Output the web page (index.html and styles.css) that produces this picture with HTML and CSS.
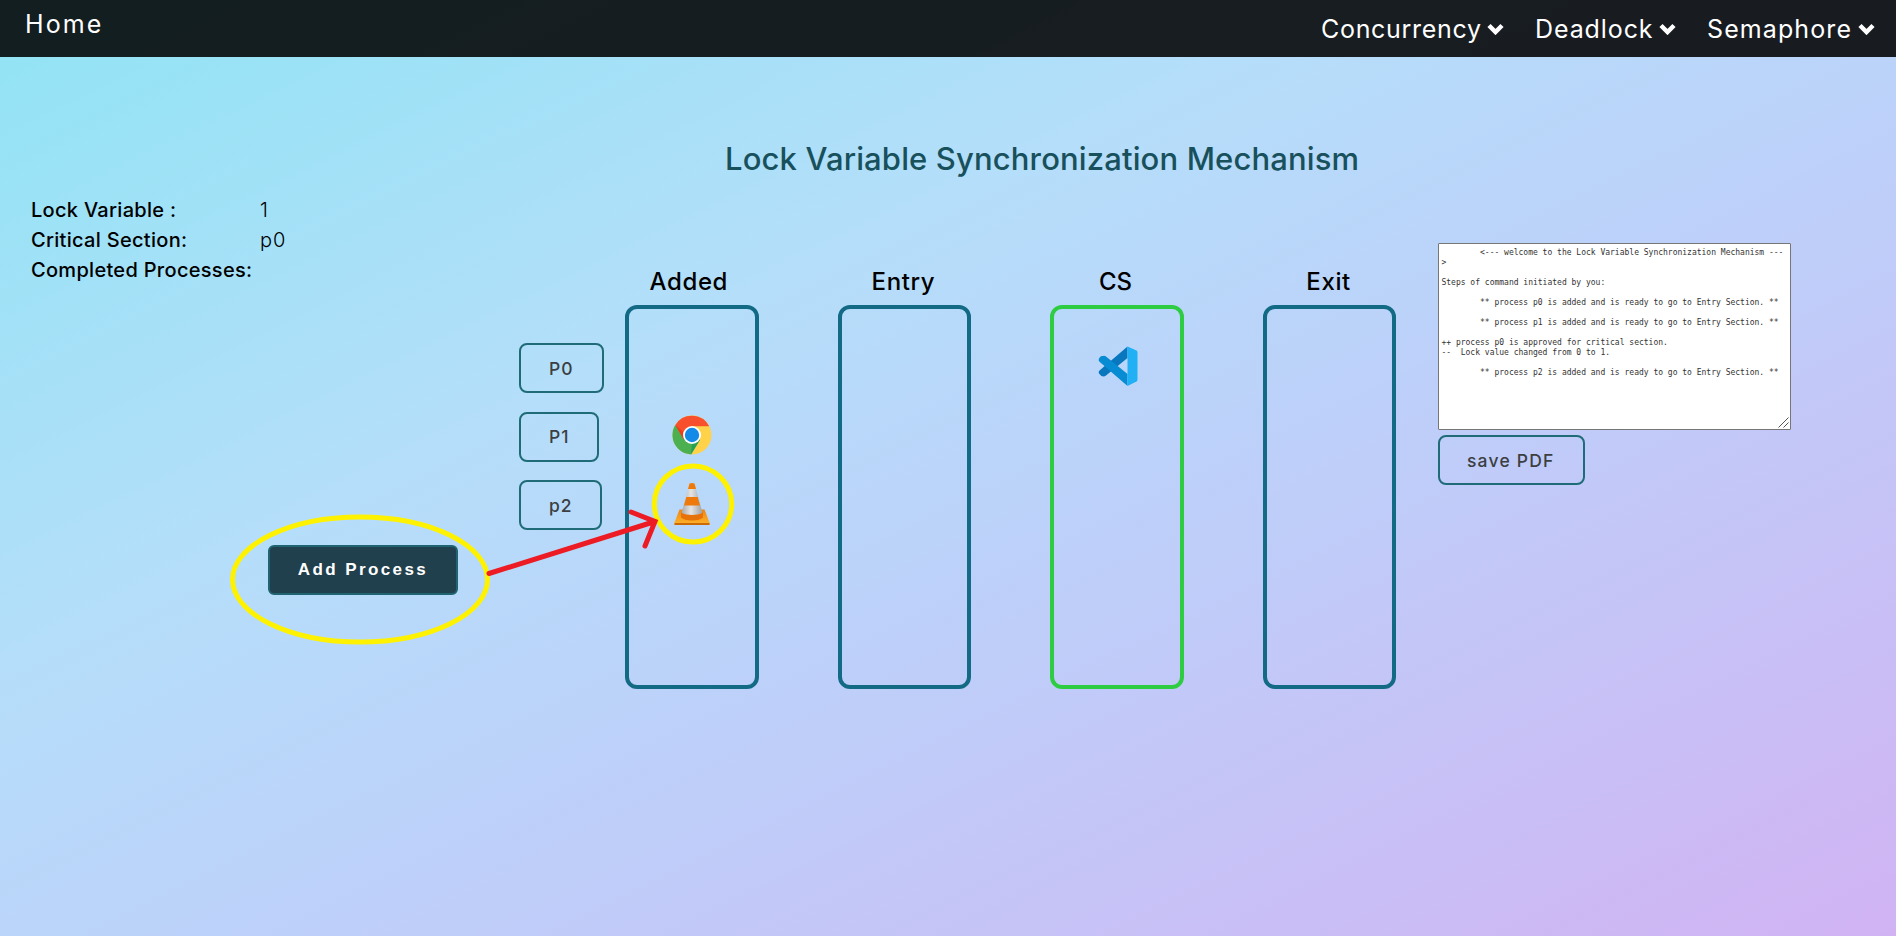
FILE: index.html
```html
<!DOCTYPE html>
<html lang="en">
<head>
<meta charset="utf-8">
<title>Lock Variable Synchronization Mechanism</title>
<link rel="stylesheet" href="styles.css">
</head>
<body>
<header class="nav">
  <a class="nav-home">Home</a>
  <nav class="nav-menu">
    <a class="nav-item"><span class="nav-conc">Concurrency</span><svg class="chevron" viewBox="0 0 17 12"><path d="M2 2.5 8.5 9 15 2.5"/></svg></a>
    <a class="nav-item"><span class="nav-dead">Deadlock</span><svg class="chevron" viewBox="0 0 17 12"><path d="M2 2.5 8.5 9 15 2.5"/></svg></a>
    <a class="nav-item"><span class="nav-sema">Semaphore</span><svg class="chevron" viewBox="0 0 17 12"><path d="M2 2.5 8.5 9 15 2.5"/></svg></a>
  </nav>
</header>
<main>
  <h1 class="title">Lock Variable Synchronization Mechanism</h1>
  <div class="board">
    <section class="side">
      <dl class="info">
        <dt>Lock Variable :</dt><dd>1</dd>
        <dt>Critical Section:</dt><dd>p0</dd>
        <dt>Completed Processes:</dt><dd></dd>
      </dl>
      <button class="add">Add Process</button>
    </section>
    <section class="processes">
      <button class="btn p0">P0</button>
      <button class="btn p1">P1</button>
      <button class="btn p2">p2</button>
    </section>
    <section class="stages">
      <div class="stage">
        <h2 class="h-added">Added</h2>
        <div class="slot slot-added">
          <svg class="app-chrome" viewBox="0 0 40 40">
            <circle cx="20" cy="20" r="19.5" fill="#ffd24a"/>
            <path d="M20 20 3.1 10.2A19.5 19.5 0 0 0 19 39.5L28 24.7Z" fill="#4caf50"/>
            <path d="M19 39.5 28 24.7 20 28Z" fill="#22a254"/>
            <path d="M3.3 10A19.5 19.5 0 0 1 37.2 11.3H20L12 24Z" fill="#f8502d"/>
            <path d="M3.3 10 12 25 11.4 17Z" fill="#f03a17"/>
            <circle cx="20" cy="20" r="9" fill="#fff"/>
            <circle cx="20" cy="20" r="7.2" fill="#128be8"/>
          </svg>
          <svg class="app-vlc" viewBox="0 0 36 42">
            <defs>
              <linearGradient id="base" x1="0" y1="0" x2="0" y2="1"><stop offset="0" stop-color="#ee8412"/><stop offset="1" stop-color="#ffb52b"/></linearGradient>
              <linearGradient id="cone"><stop offset="0" stop-color="#a8a8a8"/><stop offset=".45" stop-color="#e4e4e4"/><stop offset="1" stop-color="#a0a0a0"/></linearGradient>
            </defs>
            <path d="M5.500 26.500H30.500L35.500 39.500V42H.5V39.500Z" fill="url(#base)"/>
            <path d="M.5 40H35.500V42H.5Z" fill="#cc6a08"/>
            <path d="M7 29H29V34.500Q26 37.500 18 37.500T7 34.500Z" fill="#e8720a"/>
            <path d="M15.500.5Q18-.5 20.500.5L28.500 30Q24 32 18 32T7.500 30Z" fill="url(#cone)"/>
            <path d="M15.500.5Q18-.5 20.500.5L22 6H14ZM12.300 14H23.700L26 22.500H10Z" fill="#ee7a0b"/>
          </svg>
        </div>
      </div>
      <div class="stage"><h2 class="h-entry">Entry</h2><div class="slot"></div></div>
      <div class="stage">
        <h2 class="h-cs">CS</h2>
        <div class="slot slot-active">
          <svg class="app-code" viewBox="0 0 40 40">
            <path d="M5.500 30.500Q3 30.500 1 27.500Q0 26 1.500 24.500L29.500.5V12L8 29.500Q6.800 30.500 5.500 30.500Z" fill="#0877be"/>
            <path d="M5 10Q3.500 9.500 2 11L.8 13Q.3 14.500 1.500 15.800L29.500 40V28L8 10.500Q6.500 9.500 5 10Z" fill="#078bd3"/>
            <path d="M29.500.5 38.500 4.500Q39.500 5 39.500 6.500V33.500Q39.500 35 38.500 35.500L29.500 40Z" fill="#22b0f5"/>
          </svg>
        </div>
      </div>
      <div class="stage"><h2 class="h-exit">Exit</h2><div class="slot"></div></div>
    </section>
    <section class="log">
      <div class="log-box">
<textarea class="log-text" spellcheck="false">
	<--- welcome to the Lock Variable Synchronization Mechanism ---
>

Steps of command initiated by you:

	** process p0 is added and is ready to go to Entry Section. **

	** process p1 is added and is ready to go to Entry Section. **

++ process p0 is approved for critical section.
--  Lock value changed from 0 to 1.

	** process p2 is added and is ready to go to Entry Section. **</textarea>
        <svg class="grip" viewBox="0 0 11 11"><path d="M.5 10.500 10.500.5M5.500 10.500 10.500 5.500"/></svg>
      </div>
      <button class="btn save">save PDF</button>
    </section>
  </div>
</main>
<svg class="marks" viewBox="0 0 1896 936">
  <g class="mark-ring"><ellipse cx="360" cy="579.500" rx="127.500" ry="62.500"/><ellipse cx="693" cy="504" rx="38.700" ry="38"/></g>
  <path class="mark-arrow" d="M489 573.500 655 521.500M631 512 655 521.500 645 546"/>
</svg>
</body>
</html>
```
FILE: styles.css
```css
* { box-sizing: border-box; }
body {
  margin: 0;
  height: 936px;
  overflow: hidden;
  position: relative;
  font-family: Inter, "Open Sans", sans-serif;
  color: #000;
  background: linear-gradient(to bottom right, #90e4f4 0%, #b5defa 36%, #bfcdf9 62%, #d1b3f3 100%);
}
.nav {
  height: 57px;
  padding: 0 21px 0 25px;
  display: flex;
  justify-content: space-between;
  background: rgba(0, 0, 0, .87);
  color: #fff;
  font-size: 25px;
  font-weight: 380;
}
.nav-home { line-height: 48px; letter-spacing: 2.1px; }
.nav-menu { display: flex; gap: 31px; line-height: 59px; }
.nav-item { display: flex; gap: 6px; white-space: nowrap; }
.nav-conc { width: 160px; letter-spacing: .7px; }
.nav-dead { width: 118px; letter-spacing: .9px; }
.nav-sema { width: 145px; letter-spacing: 1.1px; }
.chevron { width: 17px; height: 12px; margin-top: 23px; fill: none; stroke: #fff; stroke-width: 4.500; }
.title {
  margin: 82px 0 0 725px;
  height: 40px;
  line-height: 40px;
  font-size: 31px;
  font-weight: 450;
  letter-spacing: .14px;
  white-space: nowrap;
  color: #18505c;
}
.board { display: flex; align-items: flex-start; padding-top: 16px; }
.side { width: 519px; flex: none; }
.info {
  margin: 0 0 0 31px;
  display: grid;
  grid-template-columns: 229px 1fr;
  grid-auto-rows: 30px;
  line-height: 30px;
  font-size: 20px;
  letter-spacing: .3px;
  white-space: nowrap;
}
.info dt { font-weight: 500; }
.info dd { margin: 0; font-weight: 300; letter-spacing: 1px; }
.add {
  display: block;
  margin: 260px 0 0 268px;
  width: 190px;
  height: 50px;
  padding: 0;
  border: 2px solid #1f6470;
  border-radius: 6px;
  background: #21404d;
  color: #fff;
  font: bold 17px "Liberation Sans", sans-serif;
  letter-spacing: 2.4px;
}
.processes {
  width: 106px;
  flex: none;
  padding-top: 148px;
  display: flex;
  flex-direction: column;
  align-items: flex-start;
  gap: 18.5px;
}
.btn {
  height: 50px;
  padding: 0 0 0 28px;
  border: 2px solid #1f6c78;
  border-radius: 8px;
  background: transparent;
  color: #3b3f42;
  font: 500 17.5px Inter, sans-serif;
  letter-spacing: 1px;
  text-align: left;
  white-space: nowrap;
}
.p0 { width: 85px; }
.p1 { width: 80px; }
.p2 { width: 83px; }
.stages { display: flex; gap: 79px; padding-top: 66px; flex: none; }
.stage { width: 133.600px; }
.stage h2 {
  margin: 0;
  height: 44px;
  line-height: 41px;
  font-size: 24px;
  font-weight: 500;
  letter-spacing: .6px;
  text-align: center;
  white-space: nowrap;
}
.stage .h-added { padding-right: 6px; }
.stage .h-entry { padding-right: 2px; }
.stage .h-cs { padding-right: 3px; letter-spacing: 0; }
.stage .h-exit { padding-right: 2px; }
.slot {
  height: 384px;
  border: 4px solid #136a84;
  border-radius: 12px;
  display: flex;
  flex-direction: column;
  align-items: center;
}
.slot-active { border-color: #2ecc40; }
.slot svg { display: block; flex: none; }
.slot-added { padding: 106px 0 0 1px; gap: 28px; }
.slot-active { padding: 37px 0 0 2px; }
.app-chrome, .app-code { width: 40px; height: 40px; }
.app-vlc { width: 36px; height: 42px; }
.log { margin-left: 41.600px; padding-top: 48px; display: flex; flex-direction: column; align-items: flex-start; gap: 5px; }
.log-box { position: relative; }
.log-text {
  display: block;
  width: 353px;
  height: 187px;
  padding: 4px 2.5px;
  border: 1px solid #767676;
  border-radius: 1px;
  overflow: hidden;
  resize: none;
  background: #fff;
  color: #333;
  font: 8px/10px "DejaVu Sans Mono", monospace;
  white-space: pre;
}
.grip { position: absolute; right: 2px; bottom: 2px; width: 11px; height: 11px; fill: none; stroke: #555; stroke-width: 1; }
.save { width: 147px; padding-left: 27px; letter-spacing: 1.2px; }
.marks { position: absolute; left: 0; top: 0; width: 1896px; height: 936px; pointer-events: none; fill: none; }
.mark-ring { stroke: #fff200; stroke-width: 5; }
.mark-arrow { stroke: #ed1c24; stroke-width: 5; stroke-linecap: round; }
```
